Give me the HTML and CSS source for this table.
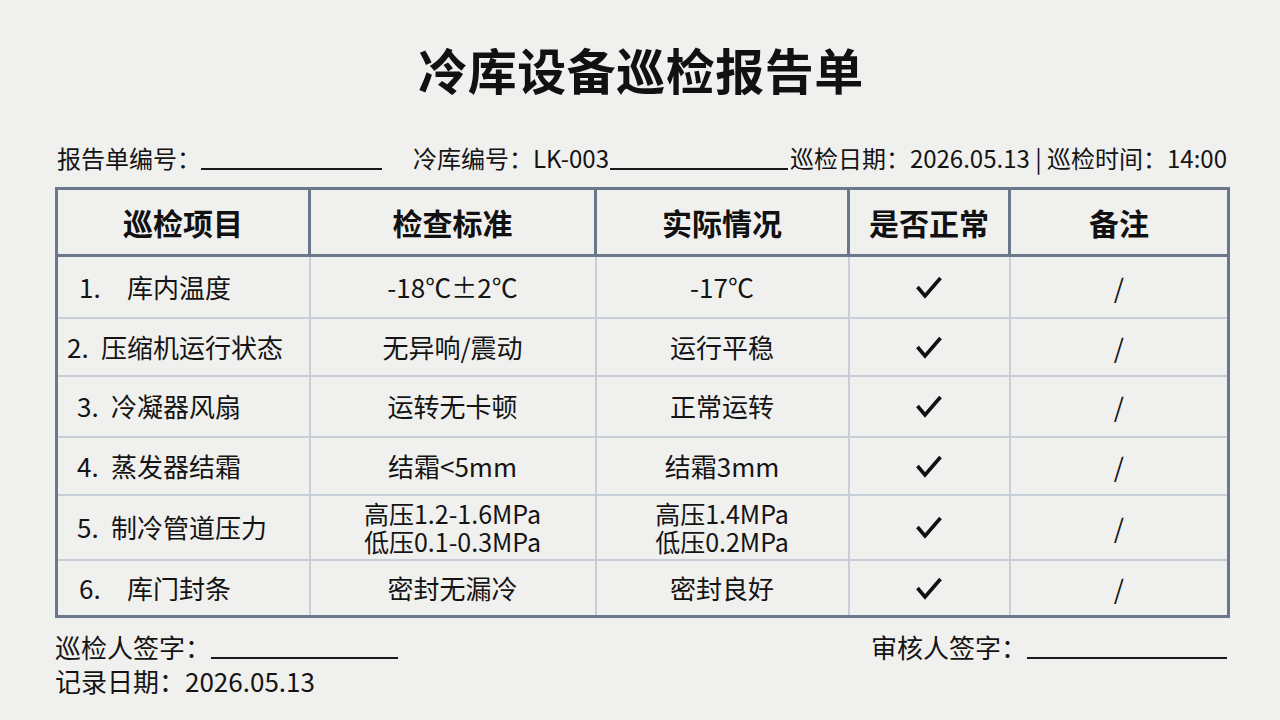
FILE: index.html
```html
<!DOCTYPE html>
<html lang="zh-CN">
<head>
<meta charset="utf-8">
<title>冷库设备巡检报告单</title>
<link rel="stylesheet" href="styles.css">
</head>
<body>
<div class="page">
  <h1 class="title">冷库设备巡检报告单</h1>
  <div class="info">
    <span class="label">报告单编号：</span><span class="blank blank-no"></span>
    <span class="label label-lk">冷库编号：LK-003</span><span class="blank blank-lk"></span>
    <span class="label">巡检日期：2026.05.13 | 巡检时间：14:00</span>
  </div>
  <table class="sheet">
    <colgroup>
      <col class="c1"><col class="c2"><col class="c3"><col class="c4"><col class="c5">
    </colgroup>
    <thead>
      <tr><th>巡检项目</th><th>检查标准</th><th>实际情况</th><th>是否正常</th><th>备注</th></tr>
    </thead>
    <tbody>
      <tr class="r1"><td class="item item-wide"><span class="num">1.</span>库内温度</td><td>-18℃±2℃</td><td>-17℃</td><td><svg class="check" viewBox="0 0 28 24"><path d="M2.5 12 L10 21 L25.5 3"/></svg></td><td class="slash">/</td></tr>
      <tr class="r2"><td class="item item-long"><span class="num">2.</span>压缩机运行状态</td><td>无异响/震动</td><td>运行平稳</td><td><svg class="check" viewBox="0 0 28 24"><path d="M2.5 12 L10 21 L25.5 3"/></svg></td><td class="slash">/</td></tr>
      <tr class="r3"><td class="item"><span class="num">3.</span>冷凝器风扇</td><td>运转无卡顿</td><td>正常运转</td><td><svg class="check" viewBox="0 0 28 24"><path d="M2.5 12 L10 21 L25.5 3"/></svg></td><td class="slash">/</td></tr>
      <tr class="r4"><td class="item"><span class="num">4.</span>蒸发器结霜</td><td>结霜&lt;5mm</td><td>结霜3mm</td><td><svg class="check" viewBox="0 0 28 24"><path d="M2.5 12 L10 21 L25.5 3"/></svg></td><td class="slash">/</td></tr>
      <tr class="r5"><td class="item"><span class="num">5.</span>制冷管道压力</td><td class="two"><span class="ln">高压1.2-1.6MPa</span><span class="ln">低压0.1-0.3MPa</span></td><td class="two"><span class="ln">高压1.4MPa</span><span class="ln">低压0.2MPa</span></td><td><svg class="check" viewBox="0 0 28 24"><path d="M2.5 12 L10 21 L25.5 3"/></svg></td><td class="slash">/</td></tr>
      <tr class="r6"><td class="item item-wide"><span class="num">6.</span>库门封条</td><td>密封无漏冷</td><td>密封良好</td><td><svg class="check" viewBox="0 0 28 24"><path d="M2.5 12 L10 21 L25.5 3"/></svg></td><td class="slash">/</td></tr>
    </tbody>
  </table>
  <div class="footer">
    <div class="sign-row">
      <div class="sign"><span>巡检人签字：</span><span class="blank blank-sign"></span></div>
      <div class="sign sign-right"><span>审核人签字：</span><span class="blank blank-audit"></span></div>
    </div>
    <div class="date">记录日期：2026.05.13</div>
  </div>
</div>
</body>
</html>
```
FILE: styles.css
```css
* { box-sizing: border-box; }
html, body {
  margin: 0;
  padding: 0;
  background: #f0f0ee;
}
body {
  font-family: "Noto Sans CJK SC", "Noto Sans", sans-serif;
  color: #141414;
  width: 1280px;
  height: 720px;
  overflow: hidden;
}
.page {
  padding: 36px 53px 0 55px;
}
.title {
  margin: 0;
  text-align: center;
  font-size: 49px;
  font-weight: 700;
  line-height: 66px;
  letter-spacing: 0.5px;
  color: #111;
}
.info {
  display: flex;
  align-items: flex-end;
  margin-top: 41px;
  padding-left: 2px;
  font-size: 24px;
  line-height: 30px;
  height: 30px;
  white-space: nowrap;
}
.blank {
  display: inline-block;
  border-bottom: 2px solid #1a1a1a;
  height: 24px;
}
.blank-no { width: 182px; margin-left: 0; margin-right: 31px; margin-bottom: 3px; }
.blank-lk { width: 179px; margin-left: 1px; margin-right: 2px; margin-bottom: 3px; }
.sheet {
  margin-top: 14px;
  width: 1172px;
  border-collapse: collapse;
  border: 3px solid #6b788b;
  table-layout: fixed;
}
.c1 { width: 253px; }
.c2 { width: 286px; }
.c3 { width: 253px; }
.c4 { width: 161px; }
.c5 { width: 219px; }
.sheet th {
  height: 67px;
  border: 3px solid #6b788b;
  font-size: 30px;
  font-weight: 700;
  text-align: center;
  padding: 0;
  color: #111;
}
.sheet td {
  border: 2px solid #c8ced8;
  font-size: 26px;
  text-align: center;
  padding: 0;
  line-height: 30px;
}
.r1 td { height: 62px; }
.r2 td { height: 58px; }
.r3 td { height: 61px; }
.r4 td { height: 58px; }
.r5 td { height: 65px; }
.r6 td { height: 57px; }
.sheet td.item {
  text-align: left;
  padding-left: 19px;
  white-space: nowrap;
}
.num {
  display: inline-block;
  width: 34px;
}
.sheet td.item-wide { padding-left: 21px; }
.item-wide .num { width: 48px; }
.sheet td.item-long { padding-left: 9px; }
.sheet td.two { font-size: 25px; }
.ln {
  display: block;
  line-height: 28px;
  height: 28px;
}
.check {
  width: 28px;
  height: 24px;
  display: block;
  margin: 0 auto;
  fill: none;
  stroke: #111;
  stroke-width: 3.6;
  stroke-linecap: butt;
  stroke-linejoin: miter;
}
.slash { font-size: 26px; }
.footer {
  margin-top: 12px;
  font-size: 26px;
  line-height: 34px;
}
.sign-row {
  display: flex;
  justify-content: space-between;
  align-items: flex-end;
}
.sign { display: flex; align-items: flex-end; }
.sign .blank { margin-bottom: 5px; height: 26px; }
.blank-sign { width: 187px; }
.blank-audit { width: 200px; }
```
